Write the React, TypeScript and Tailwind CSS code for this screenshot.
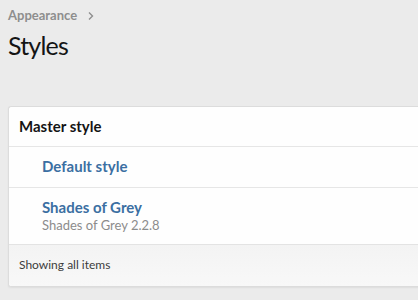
export default function App() {
  return (
    <div className="min-h-[300px] w-[418px] overflow-hidden bg-[#ebebeb] font-['Lato',sans-serif]">
      <div className="pl-2 pt-[6px]">
        {/* Breadcrumb */}
        <div className="flex items-center gap-[10px] text-[13px] font-bold text-[#8e8e8e]">
          <span>Appearance</span>
          <svg width="8" height="10" viewBox="0 0 8 10" className="mt-[1px]">
            <path d="M2 1.5 L5.5 5 L2 8.5" fill="none" stroke="#8e8e8e" strokeWidth="1.4" />
          </svg>
        </div>
        <h1 className="mt-[3px] text-[25px] leading-[32px] tracking-[-0.8px] text-[#141414]">Styles</h1>
      </div>

      {/* Block */}
      <div className="ml-2 mt-[45px] w-[420px] overflow-hidden rounded-tl-[3px] rounded-bl-[3px] border-t border-b border-l border-[#dcdcdc] bg-[#fefefe] shadow-[0_1px_2px_rgba(0,0,0,0.06)]">
        <div className="flex h-[40px] items-center border-b border-[#e6e6e6] pl-[10px] text-[15px] font-bold text-[#141414]">
          Master style
        </div>
        <div className="flex h-[41px] items-center border-b border-[#e6e6e6] pl-[33px] text-[15px] font-bold text-[#3b6fa2]">
          Default style
        </div>
        <div className="flex h-[56px] flex-col justify-center pl-[33px]">
          <div className="text-[15px] font-bold leading-[20px] text-[#3b6fa2]">Shades of Grey</div>
          <div className="text-[13px] leading-[17px] text-[#8c8c8c]">Shades of Grey 2.2.8</div>
        </div>
        <div className="flex h-[42px] items-center border-t border-[#e3e3e3] bg-gradient-to-b from-[#f3f3f3] to-[#f8f8f8] pl-[10px] text-[12px] text-[#3c3c3c]">
          Showing all items
        </div>
      </div>
    </div>
  );
}
